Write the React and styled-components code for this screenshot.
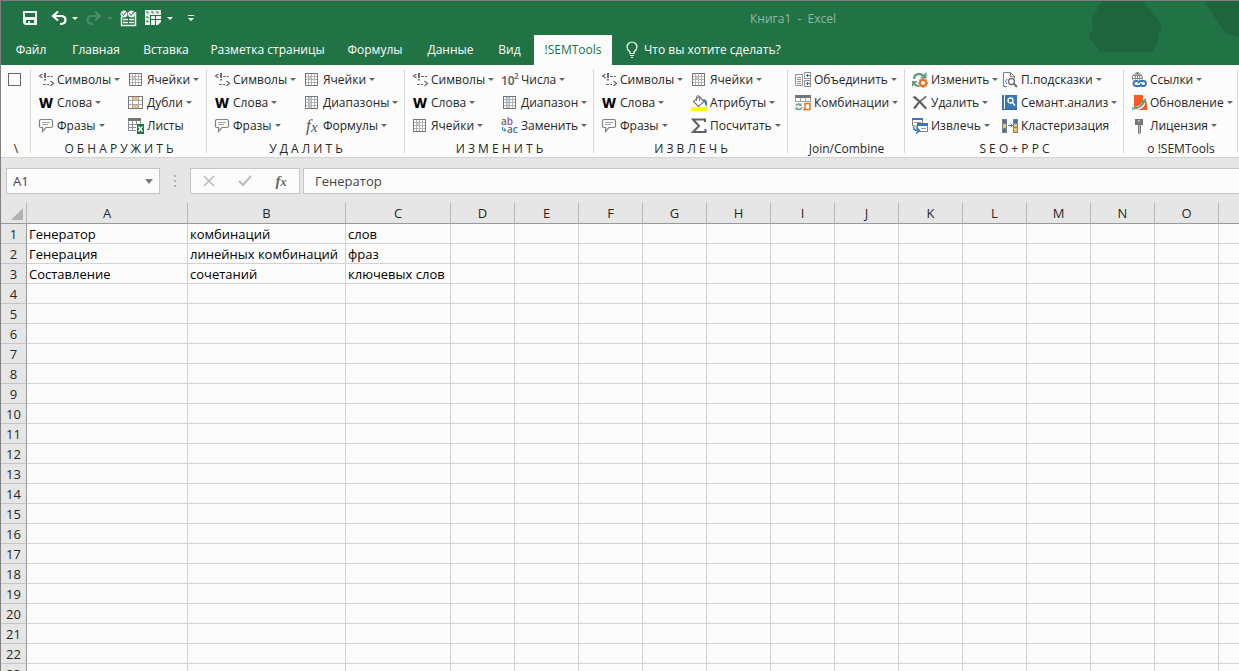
import styled, { createGlobalStyle } from "styled-components";

const GlobalStyle = createGlobalStyle`
  * {
    box-sizing: border-box;
  }
  body {
    margin: 0;
    background: #e6e6e6;
    font-family: "Open Sans", "Noto Sans", sans-serif;
    font-size: 12px;
    color: #262626;
  }
  button,
  input {
    font: inherit;
    color: inherit;
    margin: 0;
    padding: 0;
    border: none;
    background: transparent;
  }
`;

const GRAY = "#6d6d6d";
const BLUE = "#3b76b4";
const GREEN = "#217346";
const TEAL = "#5fa08a";
const ORANGE = "#e8711c";

/* ---------- icons ---------- */

const Svg = ({ w = 16, h = 16, children }) => (
  <svg width={w} height={h} viewBox={`0 0 ${w} ${h}`} fill="none" overflow="visible" aria-hidden="true">
    {children}
  </svg>
);

const SymbolsIcon = () => (
  <Svg>
    <path d="M4.500 2L1.500 4l3 2M12.500 9l3 2.500-3 2.500" stroke={GRAY} strokeWidth="1.300" />
    <path d="M6 1h2v5H6zM6 7h2v1.500H6z" fill={GRAY} />
    <path d="M9 4.500h3M13 4.500h2M5 12.500h3M9 12.500h2" stroke={GRAY} />
  </Svg>
);

const WordIcon = () => (
  <Svg>
    <text x="1" y="13" fontFamily="Noto Sans" fontSize="14" fontWeight="800" fill="#000">
      W
    </text>
  </Svg>
);

const PhraseIcon = () => (
  <Svg>
    <path
      d="M3 1.500h10q1.500 0 1.500 1.500v5q0 1.500-1.500 1.500H8L4.500 13.500V9.500H3Q1.500 9.500 1.500 8V3Q1.500 1.500 3 1.500z"
      stroke="#808080"
      strokeWidth="1.200"
    />
    <path d="M4 4.500h8M4 6.500h6" stroke="#a5a5a5" />
  </Svg>
);

const CellsIcon = ({ range }) => (
  <Svg>
    <rect x="1.500" y="1.500" width="12" height="12" fill="#fff" stroke="#767676" />
    {range ? (
      <path d="M5 2h3v11H5z" fill="#bcd3ea" />
    ) : (
      <path d="M5 5h3v3H5z" fill="#bcd3ea" />
    )}
    <path
      d="M4.500 2v11M7.500 2v11M10.500 2v11M2 4.500h11M2 7.500h11M2 10.500h11"
      stroke="#b3b3b3"
    />
  </Svg>
);

const DoublesIcon = () => (
  <Svg>
    <rect x="0.500" y="1.500" width="14" height="12" fill="#fff" stroke="#767676" />
    <path d="M4.500 2v11M10.500 2v11M1 5.500h13M1 9.500h13" stroke="#a8a8a8" />
    <path d="M5 2h5v3H5zM5 10h5v3H5z" fill="#f0c173" />
  </Svg>
);

const SheetsIcon = () => (
  <Svg>
    <path d="M0 0h13v3H0z" fill="#767676" />
    <path d="M0.500 3v9.500H8M4.500 3v10M8.500 3v4M12.500 3v3M0 6.500h9M0 9.500h8" stroke="#8f8f8f" />
    <path d="M9 6h7v10H9z" fill={GREEN} />
    <path d="M10.500 8.500l4 5M14.500 8.500l-4 5" stroke="#fff" strokeWidth="1.400" />
  </Svg>
);

const FxIcon = () => (
  <Svg>
    <text x="2" y="13" fontFamily="Liberation Serif" fontStyle="italic" fontSize="17" fill="#555">
      f
    </text>
    <text x="7" y="14" fontFamily="Liberation Serif" fontStyle="italic" fontSize="15" fill="#555">
      x
    </text>
  </Svg>
);

const NumbersIcon = () => (
  <Svg>
    <text x="-1" y="13" fontFamily="Noto Sans" fontSize="12" fontWeight="600" fill="#666">
      10
    </text>
    <text x="12" y="7" fontFamily="Noto Sans" fontSize="8" fontWeight="600" fill="#666">
      2
    </text>
  </Svg>
);

const ReplaceIcon = () => (
  <Svg>
    <text x="-1" y="7" fontFamily="Open Sans" fontSize="10" fontWeight="600" fill="#666">
      a
      <tspan fill="#8c4fb0">b</tspan>
    </text>
    <text x="5" y="15" fontFamily="Open Sans" fontSize="10" fontWeight="600" fill="#666">
      a
      <tspan fill={BLUE}>c</tspan>
    </text>
    <path d="M0.500 9v3h3M2 10.500l2 1.500-2 1.500" stroke={BLUE} />
  </Svg>
);

const FillIcon = () => (
  <Svg>
    <path d="M0 12h16v4H0z" fill="#ffff00" />
    <path d="M8 1.500L13 6.500 7.500 11.500 2.500 6.500z" fill="#fff" stroke="#767676" strokeWidth="1.200" />
    <path d="M5.500 6V1.500q1.500-2 3 0V6" stroke="#767676" />
    <path d="M12 4q3.500 0 4 3.500v4q-2-1-2.500-4z" fill={BLUE} />
  </Svg>
);

const SumIcon = () => (
  <Svg>
    <path d="M14 4V1.500H2L8 8l-6 6h12.500V11" stroke="#606060" strokeWidth="2" />
  </Svg>
);

const JoinIcon = () => (
  <Svg>
    <path d="M0.500 2.500h7v11h-7zM2 5.500h4M2 7.500h4M2 9.500h4M2 11.500h4" stroke="#909090" />
    <path d="M15.500 0.500h-6v6h6M15.500 8.500h-6v6h6M15.500 0v15" stroke="#909090" />
    <path d="M11 3.500h4M12.500 2v3M11 11.500h4M12.500 10v3" stroke={BLUE} />
  </Svg>
);

const CombineIcon = () => (
  <Svg>
    <path d="M0 0h16v3H0z" fill="#767676" />
    <path d="M0.500 3v4M5.500 3v4M10.500 3v3M15.500 3v3M0 6.500h16" stroke="#a0a0a0" />
    <path d="M1 11q1-3 4.500-1.500M7 12q-1 3.500-5 2" stroke={TEAL} strokeWidth="1.400" />
    <path d="M6.500 8v3h-3zM0.500 15.500v-3h3z" fill={TEAL} />
    <path d="M10 14V8.500h5V14M8 14.500h7.500" stroke={ORANGE} strokeWidth="1.500" />
  </Svg>
);

const ChangeIcon = () => (
  <Svg>
    <path d="M2 7q0-5 5-5 3 0 4.500 2.500" stroke={TEAL} strokeWidth="2.400" />
    <path d="M14.500 0v6.500H8z" fill={TEAL} />
    <path d="M0 15V9h5.500z" fill={TEAL} />
    <path d="M1 10q2 4 6 4" stroke={TEAL} strokeWidth="2.200" />
    <circle cx="11" cy="11" r="3" fill="#fff" stroke={ORANGE} strokeWidth="2" />
    <path
      d="M11 6v2M11 14v2M6 11h2M14 11h2M7.500 7.500L9 9M13 13l1.500 1.500M14.500 7.500L13 9M9 13l-1.500 1.500"
      stroke={ORANGE}
      strokeWidth="1.500"
    />
  </Svg>
);

const DeleteIcon = () => (
  <Svg>
    <path d="M0.500 2l2.500-1Q9 6 15 13l-1.500 1.500Q8 8 0.500 2z" fill="#606060" />
    <path d="M15 2Q8 6 3.500 14L1 13Q6 6 13.500 1z" fill="#606060" />
  </Svg>
);

const ExtractIcon = () => (
  <Svg>
    <path d="M0.500 1.500h10V8H0.500z" fill="#fff" stroke="#808080" />
    <path d="M0 0h11v2H0z" fill={BLUE} />
    <path d="M2 4.500h7" stroke="#999" />
    <path d="M5.500 6.500h10v7h-10z" fill="#fff" stroke="#808080" />
    <path d="M5 5h11v3H5z" fill={BLUE} />
    <path d="M9 10.500h5" stroke="#999" />
    <path d="M1.500 9q0 3.500 4 3.500M4 9.500l3.500 3L4 15.500" stroke={BLUE} strokeWidth="1.500" />
  </Svg>
);

const HintsIcon = () => (
  <Svg>
    <path d="M5 14.500H1.500v-14h7l4 4v2M8.500 0.500v4h4" stroke="#808080" />
    <path d="M5 7q-3 2.500 0 5" stroke={BLUE} />
    <circle cx="9.500" cy="9.500" r="3" fill="#fff" stroke="#707070" strokeWidth="1.300" />
    <path d="M11.500 11.500L15 15" stroke="#707070" strokeWidth="2" />
  </Svg>
);

const AnalysisIcon = () => (
  <Svg>
    <path d="M0 0h2v15H0zM3 0h12v15H3z" fill={BLUE} />
    <path d="M0 14.500h15" stroke="#2b5f9a" />
    <circle cx="8.500" cy="5.500" r="2.500" stroke="#fff" strokeWidth="1.300" />
    <path d="M10.500 7.500L13 10.500" stroke="#fff" strokeWidth="1.600" />
  </Svg>
);

const ClusterIcon = () => (
  <Svg>
    <path d="M0 1h5v14H0zM11 1h5v14h-5z" fill="#808080" />
    <path d="M1 2h3v3H1zM1 11h3v3H1zM12 2h3v3h-3z" fill={BLUE} />
    <path d="M1 6h3v4H1zM12 6h3v3h-3zM12 10h3v4h-3z" fill="#f0c173" />
    <path d="M6 7.500h4M8.500 5.500l2 2-2 2" stroke={BLUE} />
  </Svg>
);

const LinksIcon = () => (
  <Svg>
    <path
      d="M2 8.500a5 5 0 1 1 9-1M6.500 0.500v7M4.500 7.500Q3 4 6 0.500M8.500 7.500Q10 4 7 0.500M2 3.500h9M1 6.500h11"
      stroke="#808080"
    />
    <path
      d="M7 9H5a2.500 2.500 0 0 0 0 5h3q2 0 2-2.500M10 14h2.500a2.500 2.500 0 0 0 0-5h-3q-2 0-2 2.500"
      stroke={BLUE}
      strokeWidth="1.800"
    />
  </Svg>
);

const UpdateIcon = () => (
  <Svg>
    <path d="M3 0h9v5l4 3v7H3z" fill="#ff5a26" />
    <path d="M0 12q9 1 12-6l3 1Q12 16 3 15z" fill="#fff" />
    <path d="M1 13.500q10 0 12.500-8" stroke={TEAL} strokeWidth="2" />
    <path d="M10 7l4.500-4L16 9z" fill={TEAL} />
  </Svg>
);

const KeyIcon = () => (
  <Svg>
    <path d="M4 1h8v6h-2v8L8 16l-1-1V7H4z" fill="#767676" />
    <path d="M7 3h2" stroke="#fff" />
    <path d="M8.500 7v8" stroke="#bbb" />
  </Svg>
);

const SaveIcon = () => (
  <Svg>
    <path d="M1 1h14v14H3l-2-2zM3 3v4h10V3zM4 10v3h2v-2h2v2h4v-3z" fill="#f4f4f4" fillRule="evenodd" />
  </Svg>
);

const UndoIcon = () => (
  <Svg>
    <path d="M7 1.500L2 6l5 4.500M2.500 6H10q4.500 0 4.500 4T9 14" stroke="#fff" strokeWidth="2.200" />
  </Svg>
);

const RedoIcon = () => (
  <Svg>
    <path d="M9 1.500L14 6l-5 4.500M13.500 6H6Q1.500 6 1.500 10T7 14" stroke="#4a8c69" strokeWidth="2.200" />
  </Svg>
);

const PivotIcon = () => (
  <Svg w={17}>
    <path d="M1.500 7v8.500h14V2M3 9.500h5M9 9.500h5M3 12.500h5M9 12.500h5" stroke="#f0f0f0" strokeWidth="1.500" />
    <circle cx="4" cy="4" r="3.500" fill="#f0f0f0" />
    <circle cx="11.500" cy="4" r="3.500" fill="#f0f0f0" />
    <path d="M2 3.500L3.500 5.500 7 1M9.500 3.500L11 5.500 14.500 1" stroke={GREEN} />
  </Svg>
);

const TableIcon = () => (
  <Svg w={17}>
    <path d="M0 0h16v12l-3 3H0z" fill="#f0f0f0" />
    <path
      d="M6 5.500h10M6 9.500h10M5.500 5v10M10.500 5v10M1 2h2v1.500M6 2h2v1.500M11 2h2v1.500M1 7h2v1.500M1 11h2v1.500"
      stroke={GREEN}
    />
  </Svg>
);

const BulbIcon = () => (
  <Svg w={12} h={17}>
    <path
      d="M4 12.500V11Q1 8.500 1 6a5 5 0 0 1 10 0Q11 8.500 8 11v1.500zM4 14.500h4M5 16.500h2"
      stroke="#fff"
      strokeWidth="1.200"
    />
  </Svg>
);

/* ---------- ribbon data ---------- */

const cells = { icon: <CellsIcon />, text: "Ячейки" };
const symbols = { icon: <SymbolsIcon />, text: "Символы" };
const words = { icon: <WordIcon />, text: "Слова" };
const phrases = { icon: <PhraseIcon />, text: "Фразы" };

const groups = [
  {
    label: "О Б Н А Р У Ж И Т Ь",
    width: 176,
    columns: [
      [symbols, words, phrases],
      [cells, { icon: <DoublesIcon />, text: "Дубли" }, { icon: <SheetsIcon />, text: "Листы", plain: true }],
    ],
  },
  {
    label: "У Д А Л И Т Ь",
    width: 198,
    columns: [
      [symbols, words, phrases],
      [cells, { icon: <CellsIcon range />, text: "Диапазоны" }, { icon: <FxIcon />, text: "Формулы" }],
    ],
  },
  {
    label: "И З М Е Н И Т Ь",
    width: 189,
    columns: [
      [symbols, words, cells],
      [
        { icon: <NumbersIcon />, text: "Числа" },
        { icon: <CellsIcon range />, text: "Диапазон" },
        { icon: <ReplaceIcon />, text: "Заменить" },
      ],
    ],
  },
  {
    label: "И З В Л Е Ч Ь",
    width: 194,
    columns: [
      [symbols, words, phrases],
      [cells, { icon: <FillIcon />, text: "Атрибуты" }, { icon: <SumIcon />, text: "Посчитать" }],
    ],
  },
  {
    label: "Join/Combine",
    width: 117,
    columns: [
      [
        { icon: <JoinIcon />, text: "Объединить" },
        { icon: <CombineIcon />, text: "Комбинации" },
      ],
    ],
  },
  {
    label: "S E O + P P C",
    width: 219,
    columns: [
      [
        { icon: <ChangeIcon />, text: "Изменить" },
        { icon: <DeleteIcon />, text: "Удалить" },
        { icon: <ExtractIcon />, text: "Извлечь" },
      ],
      [
        { icon: <HintsIcon />, text: "П.подсказки" },
        { icon: <AnalysisIcon />, text: "Семант.анализ" },
        { icon: <ClusterIcon />, text: "Кластеризация", plain: true },
      ],
    ],
  },
  {
    label: "о !SEMTools",
    width: 114,
    columns: [
      [
        { icon: <LinksIcon />, text: "Ссылки" },
        { icon: <UpdateIcon />, text: "Обновление" },
        { icon: <KeyIcon />, text: "Лицензия" },
      ],
    ],
  },
];

const tabs = [
  { text: "Файл", width: 60 },
  { text: "Главная", width: 70 },
  { text: "Вставка", width: 70 },
  { text: "Разметка страницы", width: 133 },
  { text: "Формулы", width: 82 },
  { text: "Данные", width: 69 },
  { text: "Вид", width: 49 },
  { text: "!SEMTools", width: 78, active: true },
];

const columns = [
  ["A", 161],
  ["B", 158],
  ["C", 105],
  ..."DEFGHIJKLMNOP".split("").map((name) => [name, 64]),
];

const ROW_HEAD_WIDTH = 26;
const sheetWidth = columns.reduce((sum, [, width]) => sum + width, ROW_HEAD_WIDTH);

const data = [
  ["Генератор", "комбинаций", "слов"],
  ["Генерация", "линейных комбинаций", "фраз"],
  ["Составление", "сочетаний", "ключевых слов"],
];

const rows = Array.from({ length: 23 }, (_, i) => data[i] || []);

const App = () => {
  return (
    <>
      <GlobalStyle />
      <Window>
        <Header>
          <Splash viewBox="0 0 150 52" aria-hidden="true">
            <path d="M13 0l-1 3-4 3v4l-4 4-1 5 1 6-1 5-3 2 1 6 4 5 6 8h53l1-4 4-5v-9l3-3v-7l-2-1-1-4-4-3-3-6-5-4-1-5z" />
            <path d="M113 0l4 3 2 4 4 3v3l5 6 3 6 5 6 5 3 9 2V0z" />
          </Splash>
          <TitleBar>
            <QuickAccess>
              <QuickButton $width={29} aria-label="Сохранить">
                <SaveIcon />
              </QuickButton>
              <QuickButton $width={35} aria-label="Отменить">
                <UndoIcon />
                <Caret $color="#fff" />
              </QuickButton>
              <QuickButton $width={34} aria-label="Вернуть">
                <RedoIcon />
                <Caret $color="#4a8c69" />
              </QuickButton>
              <QuickButton $width={25} aria-label="Проверка">
                <PivotIcon />
              </QuickButton>
              <QuickButton $width={43} aria-label="Таблица">
                <TableIcon />
                <Caret $color="#fff" />
              </QuickButton>
              <QuickButton $width={10} aria-label="Настройка панели">
                <svg width="7" height="6" viewBox="0 0 7 6">
                  <path d="M0 0h6v1H0zM0 3h6L3 6z" fill="#fff" />
                </svg>
              </QuickButton>
            </QuickAccess>
            <Title>{"Книга1  -  Excel"}</Title>
          </TitleBar>
          <Tabs>
            {tabs.map((tab) => (
              <Tab key={tab.text} $width={tab.width} $active={tab.active}>
                {tab.text}
              </Tab>
            ))}
            <TellMe>
              <BulbIcon />
              Что вы хотите сделать?
            </TellMe>
          </Tabs>
        </Header>

        <Ribbon>
          <Group $width={30}>
            <CheckArea>
              <CheckBox type="checkbox" aria-label="\" />
            </CheckArea>
            <GroupLabel>\</GroupLabel>
          </Group>
          {groups.map((group) => (
            <Group key={group.label} $width={group.width}>
              <GroupColumns>
                {group.columns.map((items, i) => (
                  <GroupColumn key={i}>
                    {items.map((item) => (
                      <Tool key={item.text}>
                        <IconSlot>{item.icon}</IconSlot>
                        {item.text}
                        {!item.plain && <Caret $color="#666" />}
                      </Tool>
                    ))}
                  </GroupColumn>
                ))}
              </GroupColumns>
              <GroupLabel>{group.label}</GroupLabel>
            </Group>
          ))}
        </Ribbon>

        <FormulaBar>
          <NameBox>
            <BarInput defaultValue="A1" aria-label="Имя" />
            <NameButton aria-label="Список имён">
              <svg width="8" height="5" viewBox="0 0 8 5">
                <path d="M0 0h8L4 5z" fill="#777" />
              </svg>
            </NameButton>
          </NameBox>
          <Grip>
            <i />
            <i />
            <i />
          </Grip>
          <FormulaButtons>
            <button aria-label="Отмена">
              <Svg w={12} h={12}>
                <path d="M1 1l10 10M11 1L1 11" stroke="#bdbdbd" strokeWidth="1.600" />
              </Svg>
            </button>
            <button aria-label="Ввод">
              <Svg w={14} h={12}>
                <path d="M1 6l4 4 8-9" stroke="#bdbdbd" strokeWidth="2.200" />
              </Svg>
            </button>
            <FunctionButton aria-label="Вставить функцию">
              f<small>x</small>
            </FunctionButton>
          </FormulaButtons>
          <FormulaField>
            <BarInput defaultValue="Генератор" aria-label="Строка формул" />
          </FormulaField>
        </FormulaBar>

        <SheetArea>
          <Sheet $width={sheetWidth}>
            <colgroup>
              <col width={ROW_HEAD_WIDTH} />
              {columns.map(([name, width]) => (
                <col key={name} width={width} />
              ))}
            </colgroup>
            <thead>
              <tr>
                <Corner>
                  <svg width="12" height="12" viewBox="0 0 12 12" aria-hidden="true">
                    <path d="M12 0v12H0z" fill="#b2b2b2" />
                  </svg>
                </Corner>
                {columns.map(([name]) => (
                  <ColumnHead key={name} scope="col">
                    {name}
                  </ColumnHead>
                ))}
              </tr>
            </thead>
            <tbody>
              {rows.map((row, r) => (
                <tr key={r}>
                  <RowHead scope="row">{r + 1}</RowHead>
                  {columns.map(([name], c) => (
                    <Cell key={name}>{row[c]}</Cell>
                  ))}
                </tr>
              ))}
            </tbody>
          </Sheet>
        </SheetArea>
      </Window>
    </>
  );
};

export default App;

const Window = styled.main`
  display: flex;
  flex-direction: column;
  height: 100vh;
  overflow: hidden;
  border-top: 1px solid #808080;
  border-left: 1px solid #808080;
`;

const Header = styled.header`
  position: relative;
  flex: none;
  background: #217346;
  color: #fff;
`;

const Splash = styled.svg`
  position: absolute;
  top: 0;
  right: 0;
  width: 150px;
  height: 52px;
  fill: #1e643d;
`;

const TitleBar = styled.div`
  display: flex;
  align-items: center;
  height: 34px;
`;

const QuickAccess = styled.div`
  display: flex;
  align-items: center;
  flex: 0 0 749px;
  padding-left: 21px;
`;

const QuickButton = styled.button`
  display: flex;
  align-items: center;
  flex: none;
  gap: 5px;
  width: ${({ $width }) => $width}px;
  height: 24px;
`;

const Title = styled.span`
  color: #90b9a2;
  white-space: pre;
`;

const Caret = styled.span`
  flex: none;
  border: 3px solid transparent;
  border-top-color: ${({ $color }) => $color};
  border-bottom: none;
`;

const Tabs = styled.nav`
  display: flex;
  height: 30px;
`;

const Tab = styled.button`
  flex: 0 0 ${({ $width }) => $width}px;
  padding-bottom: 2px;
  white-space: nowrap;
  background: ${({ $active }) => ($active ? "#fcfcfc" : "transparent")};
  color: ${({ $active }) => ($active ? "#217346" : "#fff")};
`;

const TellMe = styled.button`
  display: flex;
  align-items: center;
  gap: 6px;
  padding: 0 0 2px 14px;
  white-space: nowrap;
`;

const Ribbon = styled.section`
  display: flex;
  flex: none;
  padding-top: 3px;
  background: #fcfcfc;
  border-bottom: 1px solid #d2d2d2;
`;

const Group = styled.div`
  flex: 0 0 ${({ $width }) => $width}px;
  min-width: 0;
  background: linear-gradient(#d8d8d8, #d8d8d8) right 1px / 1px 84px no-repeat;
`;

const GroupColumns = styled.div`
  display: flex;
  height: 69px;
  padding-left: 7px;
`;

const GroupColumn = styled.div`
  flex: 1;
  min-width: 0;
  &:not(:last-child) {
    flex: 0 0 90px;
  }
`;

const Tool = styled.button`
  display: flex;
  align-items: center;
  height: 23px;
  white-space: nowrap;
  ${Caret} {
    margin-left: 3px;
  }
`;

const IconSlot = styled.span`
  display: flex;
  flex: 0 0 19px;
  width: 19px;
`;

const GroupLabel = styled.div`
  height: 20px;
  line-height: 24px;
  text-align: center;
  white-space: pre;
`;

const CheckArea = styled.div`
  height: 69px;
  padding: 5px 0 0 7px;
`;

const CheckBox = styled.input`
  && {
    appearance: none;
    display: block;
    width: 13px;
    height: 13px;
    border: 1px solid #666;
    background: #fff;
  }
`;

const FormulaBar = styled.section`
  display: flex;
  flex: none;
  padding: 10px 0 9px 5px;
  font-size: 13px;
  color: #444;
`;

const NameBox = styled.div`
  display: flex;
  width: 154px;
  height: 26px;
  border: 1px solid #c6c6c6;
  background: #fcfcfc;
`;

const BarInput = styled.input`
  flex: 1;
  min-width: 0;
  padding-left: 6px;
  outline: none;
`;

const NameButton = styled.button`
  display: flex;
  align-items: center;
  justify-content: center;
  width: 20px;
`;

const Grip = styled.div`
  display: flex;
  flex-direction: column;
  align-items: center;
  justify-content: center;
  gap: 3px;
  width: 30px;
  i {
    width: 2px;
    height: 2px;
    background: #b0b0b0;
  }
`;

const FormulaButtons = styled.div`
  display: flex;
  width: 110px;
  border: 1px solid #c6c6c6;
  background: #fcfcfc;
  button {
    display: flex;
    flex: 1;
    align-items: center;
    justify-content: center;
  }
`;

const FunctionButton = styled.button`
  font-family: "Liberation Serif", serif;
  font-style: italic;
  font-weight: 700;
  font-size: 15px;
  color: #666;
  small {
    font-size: 12px;
    padding-top: 3px;
  }
`;

const FormulaField = styled.div`
  display: flex;
  flex: 1;
  margin-left: 3px;
  padding-left: 5px;
  border: 1px solid #c6c6c6;
  border-right: none;
  background: #fcfcfc;
`;

const SheetArea = styled.div`
  flex: 1;
  min-height: 0;
  overflow: hidden;
`;

const Sheet = styled.table`
  table-layout: fixed;
  width: ${({ $width }) => $width}px;
  border-collapse: separate;
  border-spacing: 0;
  font-size: 13px;
  line-height: 17px;
`;

const ColumnHead = styled.th`
  height: 21px;
  padding: 1px 0 0;
  font-weight: 400;
  background: #e6e6e6;
  border-right: 1px solid #b8b8b8;
  border-bottom: 1px solid #999;
`;

const Corner = styled.td`
  height: 21px;
  padding: 0 3px 3px 0;
  text-align: right;
  line-height: 0;
  vertical-align: bottom;
  border-right: 1px solid #b8b8b8;
  border-bottom: 1px solid #999;
`;

const RowHead = styled.th`
  height: 20px;
  padding: 2px 0 0;
  font-weight: 400;
  background: #e6e6e6;
  border-right: 1px solid #999;
  border-bottom: 1px solid #c4c4c4;
`;

const Cell = styled.td`
  height: 20px;
  padding: 2px 0 0 2px;
  overflow: hidden;
  white-space: nowrap;
  color: #000;
  background: #fcfcfc;
  border-right: 1px solid #d2d2d2;
  border-bottom: 1px solid #d2d2d2;
`;
